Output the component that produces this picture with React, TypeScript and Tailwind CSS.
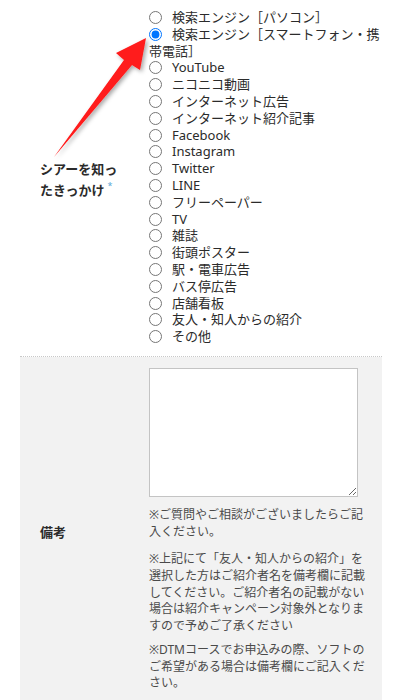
const options = [
  "検索エンジン［パソコン］",
  "検索エンジン［スマートフォン・携帯電話］",
  "YouTube",
  "ニコニコ動画",
  "インターネット広告",
  "インターネット紹介記事",
  "Facebook",
  "Instagram",
  "Twitter",
  "LINE",
  "フリーペーパー",
  "TV",
  "雑誌",
  "街頭ポスター",
  "駅・電車広告",
  "バス停広告",
  "店舗看板",
  "友人・知人からの紹介",
  "その他",
];

export default function App() {
  return (
    <main
      className="relative min-h-[700px] bg-white text-[#2b2b2b] overflow-hidden"
      style={{ fontFamily: '"Noto Sans", "Noto Sans CJK JP", sans-serif' }}
    >
      <div className="mx-[20px] w-[362px]">
        {/* row 1 */}
        <div className="grid grid-cols-[129px_1fr] border-b border-dotted border-[#c8c8c8]">
          <div className="flex items-center pl-[20px] pr-[25px] pt-[4px]">
            <p className="text-[13px] font-bold leading-[21px]">
              シアーを知ったきっかけ
              <span className="inline-block align-top ml-[3px] mt-[1px] text-[9px] leading-[9px] text-[#5aa7d6] font-normal">*</span>
            </p>
          </div>
          <div className="pt-[9px] pb-[11px] text-[13px] leading-[16.8px]">
            {options.map((o, i) => (
              <label key={o} className="block">
                <input
                  type="radio"
                  name="trigger"
                  defaultChecked={i === 1}
                  className="w-[13px] h-[13px] mr-[10px] align-[-2px]"
                />
                {o}
              </label>
            ))}
          </div>
        </div>

        {/* row 2 */}
        <div className="grid grid-cols-[129px_1fr] bg-[#f2f2f2]">
          <div className="flex items-center pl-[20px]">
            <p className="text-[13px] font-bold">備考</p>
          </div>
          <div className="pt-[11px] pb-[16px] pr-[12px]">
            <textarea className="block w-[209px] h-[129px] bg-white border border-[#c4c4c4] resize-y" />
            <div className="mt-[10px] text-[12px] leading-[16.7px] text-[#4a4a4a]">
              <p>※ご質問やご相談がございましたらご記入ください。</p>
              <p className="mt-[11px]">
                ※上記にて「友人・知人からの紹介」を選択した方はご紹介者名を備考欄に記載してください。ご紹介者名の記載がない場合は紹介キャンペーン対象外となりますので予めご了承ください
              </p>
              <p className="mt-[7px]">
                ※DTMコースでお申込みの際、ソフトのご希望がある場合は備考欄にご記入ください。
              </p>
            </div>
          </div>
        </div>
      </div>

      {/* red arrow annotation */}
      <svg
        className="absolute left-0 top-0 pointer-events-none"
        width="400"
        height="200"
        viewBox="0 0 400 200"
      >
        <defs>
          <filter id="sh" x="-20%" y="-20%" width="140%" height="140%">
            <feDropShadow dx="2" dy="2" stdDeviation="2" floodColor="#000" floodOpacity="0.35" />
          </filter>
        </defs>
        <polygon
          points="54,157 124,60 116,53 146,38 140,70 132,65"
          fill="#ff1a1a"
          filter="url(#sh)"
        />
      </svg>
    </main>
  );
}
